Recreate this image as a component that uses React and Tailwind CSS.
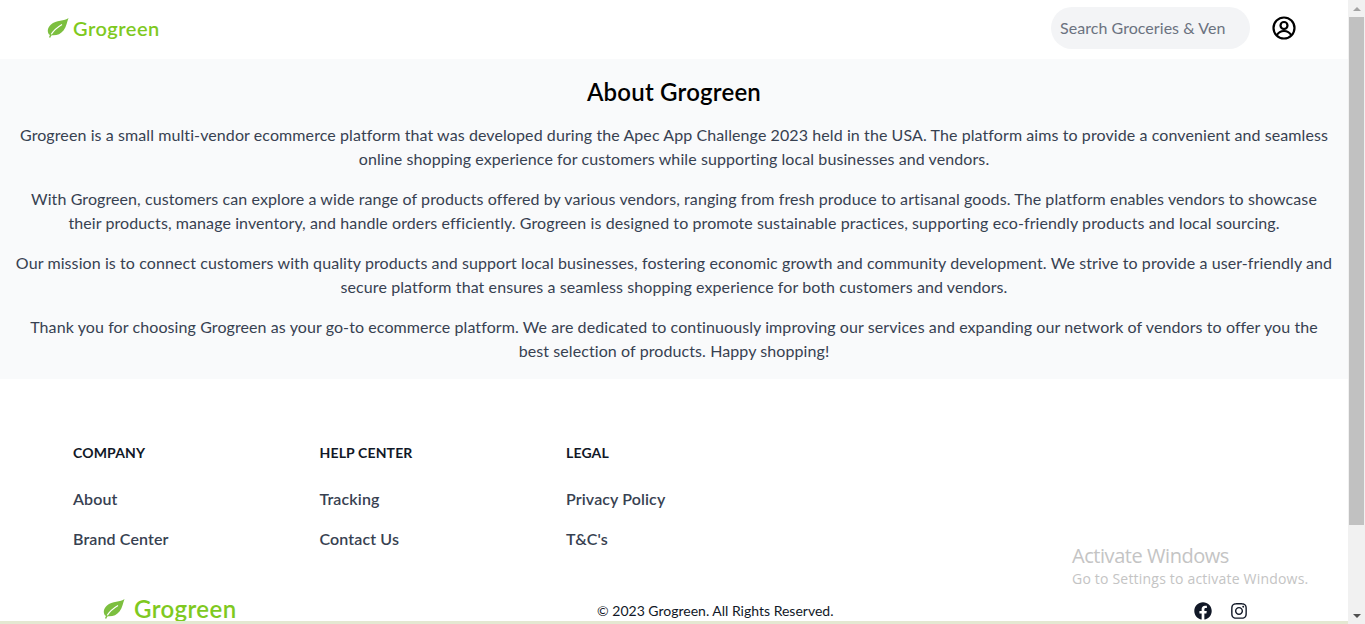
import { FaFacebook, FaInstagram } from "react-icons/fa";

function Leaf({ className }) {
  return (
    <svg viewBox="0 0 22 20" className={className}>
      <path
        d="M21.5 0C18 3 9 2 4 6.5C0.5 9.5 0 13.5 2 16.500C7 18.500 13 17 16.500 12.500C19.500 8.500 20 4 21.500 0Z"
        fill="#7cbf3f"
      />
      <path d="M4.200 16.500C6.500 12.500 10 9.500 15 6.500" fill="none" stroke="#fff" strokeWidth="1.200" />
      <path d="M2.600 19.500C3 18.500 3.500 17.500 4.200 16.500" fill="none" stroke="#7cbf3f" strokeWidth="1.400" />
    </svg>
  );
}

function Logo({ big }) {
  return (
    <div className={big ? "flex items-center gap-[9px]" : "flex items-center gap-[4px]"}>
      <Leaf className="h-[20px] w-[22px]" />
      <span
        className={
          big
            ? "text-[24px] leading-[32px] font-semibold text-[#7fc91f] tracking-[0.4px]"
            : "text-[20px] leading-[28px] font-semibold text-[#7fc91f] tracking-[0.5px]"
        }
      >
        Grogreen
      </span>
    </div>
  );
}

function FooterColumn({ title, links }) {
  return (
    <div className="w-[246.5px]">
      <h3 className="text-[14px] leading-[20px] font-bold tracking-[0.15px] text-[#111827] uppercase">{title}</h3>
      <ul className="mt-[24px] flex flex-col gap-[16px]">
        {links.map((l) => (
          <li key={l} className="text-[16px] leading-[24px] font-semibold tracking-[0.12px] text-[#374151]">
            {l}
          </li>
        ))}
      </ul>
    </div>
  );
}

export default function App() {
  return (
    <div className="relative flex h-[624px] w-full overflow-hidden bg-white font-['Lato',sans-serif]">
      <div className="flex-1 min-w-0">
        <header className="flex h-[59px] items-center justify-between pb-[3px] pl-[47px] pr-[52px]">
          <Logo />
          <div className="flex items-center gap-[22px]">
            <div className="flex h-[42px] w-[199px] items-center overflow-hidden rounded-full bg-[#f3f4f6] pl-[9px]">
              <span className="whitespace-nowrap text-[16px] tracking-[0.05px] text-[#6b7280]">
                Search Groceries &amp; Ven
              </span>
            </div>
            <svg viewBox="0 0 24 24" className="h-[24px] w-[24px]" fill="none" stroke="#000" strokeWidth="2.200">
              <circle cx="12" cy="12" r="10.500" />
              <circle cx="12" cy="9.500" r="3.500" />
              <path d="M4.800 19.200C6.500 16.200 9 15 12 15s5.500 1.200 7.200 4.200" />
            </svg>
          </div>
        </header>

        <section className="flex flex-col gap-[16px] bg-[#f9fafb] py-[16px] text-center text-[16px] leading-[24px] tracking-[0.09px] text-[#374151]">
          <h1 className="-mb-[1px] pt-[1px] text-[24px] leading-[32px] font-semibold tracking-[0.2px] text-black">About Grogreen</h1>
          <p className="px-[14px]">
            Grogreen is a small multi-vendor ecommerce platform that was developed during the Apec App Challenge 2023
            held in the USA. The platform aims to provide a convenient and seamless online shopping experience for
            customers while supporting local businesses and vendors.
          </p>
          <p className="px-[14px]">
            With Grogreen, customers can explore a wide range of products offered by various vendors, ranging from fresh
            produce to artisanal goods. The platform enables vendors to showcase their products, manage inventory, and
            handle orders efficiently. Grogreen is designed to promote sustainable practices, supporting eco-friendly
            products and local sourcing.
          </p>
          <p className="px-[14px]">
            Our mission is to connect customers with quality products and support local businesses, fostering economic
            growth and community development. We strive to provide a user-friendly and secure platform that ensures a
            seamless shopping experience for both customers and vendors.
          </p>
          <p className="px-[14px]">
            Thank you for choosing Grogreen as your go-to ecommerce platform. We are dedicated to continuously improving
            our services and expanding our network of vendors to offer you the best selection of products. Happy
            shopping!
          </p>
        </section>

        <footer className="pt-[64px]">
          <div className="flex pl-[73px]">
            <FooterColumn title="Company" links={["About", "Brand Center"]} />
            <FooterColumn title="Help Center" links={["Tracking", "Contact Us"]} />
            <FooterColumn title="Legal" links={["Privacy Policy", "T&C's"]} />
          </div>
          <div className="mt-[37px] flex h-[42px] items-center justify-between pl-[103px] pr-[100px]">
            <Logo big />
            <span className="pt-[4px] text-[14px] leading-[20px] text-[#111827]">© 2023 Grogreen. All Rights Reserved.</span>
            <div className="flex items-center gap-[18px] pt-[4px] text-[#111827]">
              <FaFacebook className="h-[18px] w-[18px]" />
              <FaInstagram className="h-[18px] w-[18px]" />
            </div>
          </div>
        </footer>
      </div>

      {/* page scrollbar */}
      <div className="flex w-[17px] flex-col items-center bg-[#f1f1f1]">
        <div className="flex h-[17px] items-center justify-center text-[#a3a3a3]">
          <div className="h-0 w-0 border-x-[4px] border-b-[4px] border-x-transparent border-b-current" />
        </div>
        <div className="h-[508px] w-[15px] bg-[#c1c1c1]" />
        <div className="mt-auto flex h-[17px] items-center justify-center text-[#505050]">
          <div className="h-0 w-0 border-x-[4px] border-t-[4px] border-x-transparent border-t-current" />
        </div>
      </div>

      {/* windows watermark */}
      <div className="absolute left-[1072px] top-[544px] font-['Open_Sans',sans-serif] text-[#c4c4c4]">
        <div className="text-[20px] leading-[24px] tracking-[-0.45px]">Activate Windows</div>
        <div className="text-[14px] leading-[22px] tracking-[0.2px]">Go to Settings to activate Windows.</div>
      </div>

      {/* strip along the bottom edge */}
      <div className="absolute bottom-0 left-0 h-[3px] w-[1348px] bg-[#e4e8d2]" />
    </div>
  );
}
